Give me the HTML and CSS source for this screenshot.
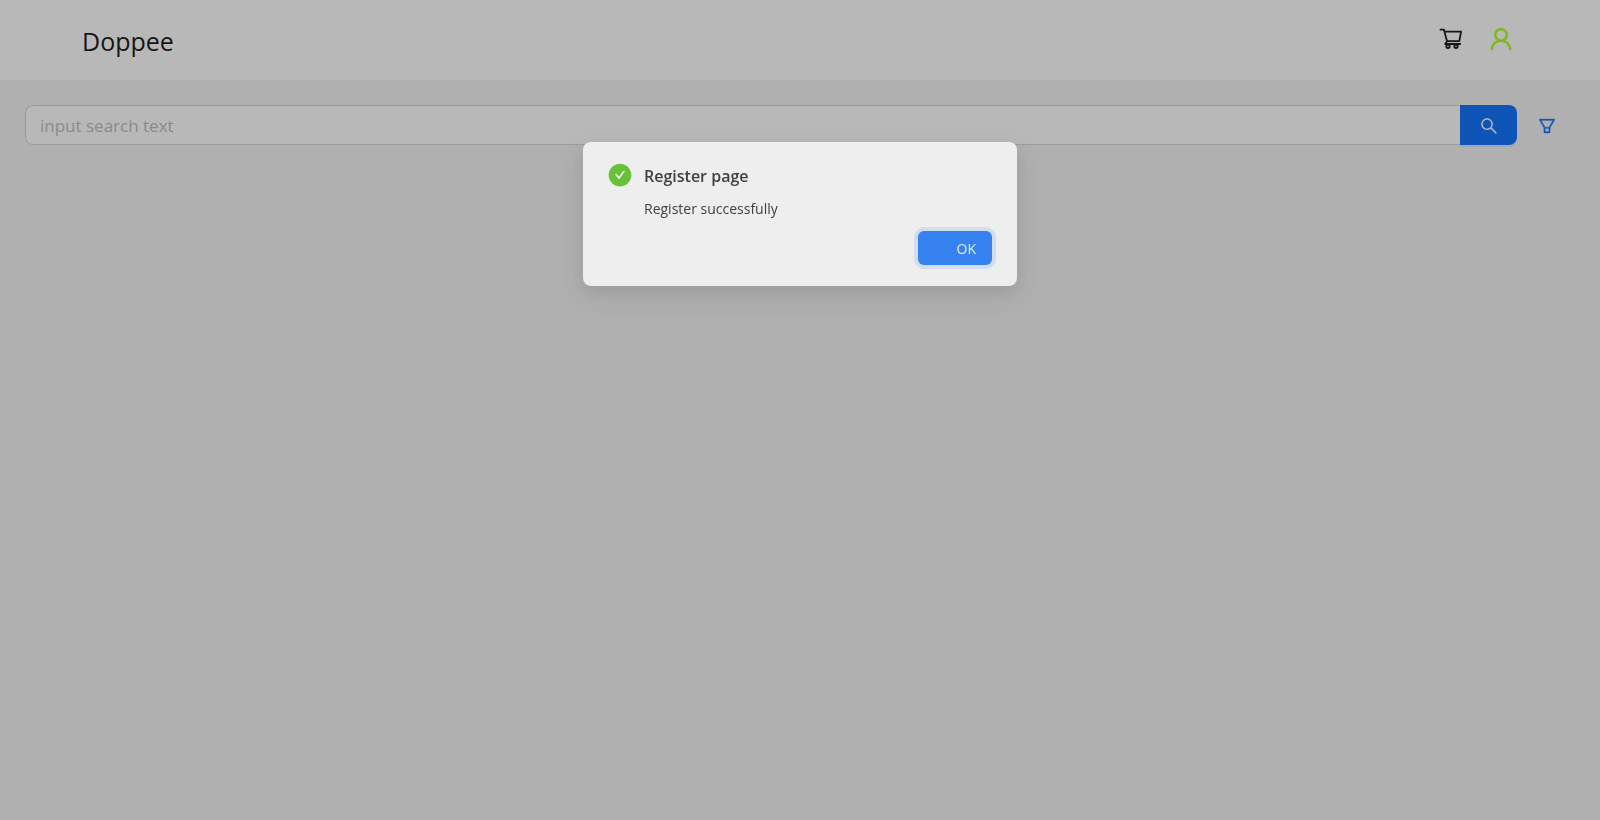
FILE: index.html
```html
<!DOCTYPE html>
<html lang="en">
<head>
<meta charset="utf-8">
<title>Doppee</title>
<link rel="stylesheet" href="styles.css">
</head>
<body>
<header class="header">
  <a class="brand" href="#">Doppee</a>
  <nav class="actions">
    <a class="action" href="#" aria-label="Cart">
      <svg class="icon-cart" viewBox="2 2 25 25" fill="none" stroke="currentColor" stroke-width="1.8" stroke-linecap="round" stroke-linejoin="round"><path d="M4.500 5.700H8L11 17.200H23.300L25.100 7.700H8.600M11 17.200L9.200 20H24.200"/><circle cx="12" cy="22.300" r="1.700"/><circle cx="20" cy="22.300" r="1.700"/></svg>
    </a>
    <a class="action action-user" href="#" aria-label="Account">
      <svg class="icon-user" viewBox="0 0 1024 1024" fill="currentColor" stroke="currentColor" stroke-width="14"><path d="M858.5 763.6a374 374 0 00-80.6-119.5 375.6 375.6 0 00-119.5-80.6c-.4-.2-.8-.3-1.2-.5C719.5 518 760 444.7 760 362c0-137-111-248-248-248S264 225 264 362c0 82.7 40.5 156 102.8 201.1-.4.2-.8.3-1.2.5-44.8 18.9-85 46-119.5 80.6a375.6 375.6 0 00-80.6 119.5A371.7 371.7 0 00136 901.8a8 8 0 008 8.2h60c4.4 0 7.9-3.5 8-7.8 2-77.2 33-149.5 87.8-204.3 56.7-56.7 132-87.9 212.2-87.9s155.5 31.2 212.2 87.9C779 752.7 810 825 812 902.2c.1 4.4 3.6 7.8 8 7.8h60a8 8 0 008-8.2c-1-47.8-10.9-94.3-29.5-138.2zM512 534c-45.9 0-89.1-17.9-121.6-50.4S340 407.9 340 362c0-45.9 17.9-89.1 50.4-121.6S466.1 190 512 190s89.1 17.9 121.6 50.4S684 316.1 684 362c0 45.9-17.9 89.1-50.4 121.6S557.9 534 512 534z"/></svg>
    </a>
  </nav>
</header>
<main class="content">
  <form class="search">
    <input class="search-input" type="text" placeholder="input search text" aria-label="Search">
    <button class="search-button" type="button" aria-label="Search">
      <svg class="icon" viewBox="0 0 1024 1024" fill="currentColor"><path d="M909.6 854.5L649.9 594.8C690.2 542.7 712 479 712 412c0-80.2-31.3-155.4-87.9-212.1-56.6-56.7-132-87.9-212.1-87.9s-155.5 31.3-212.1 87.9C143.2 256.5 112 331.8 112 412c0 80.1 31.3 155.5 87.9 212.1C256.5 680.8 331.8 712 412 712c67 0 130.6-21.8 182.7-62l259.7 259.6a8.2 8.2 0 0011.6 0l43.6-43.5a8.2 8.2 0 000-11.6zM570.4 570.4C528 612.7 471.8 636 412 636s-116-23.3-158.4-65.6C211.3 528 188 471.8 188 412s23.3-116.1 65.6-158.4C296 211.3 352.2 188 412 188s116.1 23.2 158.4 65.6S636 352.2 636 412s-23.3 116.1-65.6 158.4z"/></svg>
    </button>
    <button class="filter-button" type="button" aria-label="Filter">
      <svg class="icon" viewBox="0 0 1024 1024" fill="currentColor" stroke="currentColor" stroke-width="14"><path d="M880.1 154H143.9c-24.5 0-39.8 26.7-27.5 48L349 597.4V838c0 17.7 14.2 32 31.8 32h262.4c17.6 0 31.8-14.3 31.8-32V597.4L907.7 202c12.2-21.3-3.1-48-27.6-48zM603.4 798H420.6V642h182.9v156zm9.6-236.6l-9.5 16.6h-183l-9.5-16.6L212.7 226h598.6L613 561.4z"/></svg>
    </button>
  </form>
</main>
<div class="mask">
  <section class="dialog" role="dialog" aria-modal="true" aria-labelledby="dialog-title">
    <div class="dialog-body">
      <svg class="icon-success" viewBox="0 0 1024 1024" fill="currentColor"><path d="M512 64C264.6 64 64 264.6 64 512s200.6 448 448 448 448-200.6 448-448S759.4 64 512 64zm193.5 301.7l-210.6 292a31.8 31.8 0 01-51.7 0L318.5 484.9c-3.8-5.3 0-12.7 6.5-12.7h46.9c10.2 0 19.9 4.9 25.9 13.3l71.2 98.8 157.2-218c6-8.3 15.6-13.3 25.9-13.3H699c6.5 0 10.3 7.4 6.5 12.7z"/></svg>
      <div class="dialog-text">
        <h2 class="dialog-title" id="dialog-title">Register page</h2>
        <p class="dialog-message">Register successfully</p>
      </div>
    </div>
    <div class="dialog-footer">
      <button class="ok-button" type="button">OK</button>
    </div>
  </section>
</div>
</body>
</html>
```
FILE: styles.css
```css
* {
  box-sizing: border-box;
}

body {
  margin: 0;
  min-height: 100vh;
  background: #f4f4f4;
  color: #1f1f1f;
  font-family: "Segoe UI", "Open Sans", "Noto Sans", sans-serif;
  font-size: 14px;
}

button {
  border: 0;
  padding: 0;
  font: inherit;
  cursor: pointer;
}

svg {
  display: block;
}

.header {
  display: flex;
  align-items: center;
  justify-content: space-between;
  height: 80px;
  padding: 0 82px;
  background: #fff;
}

.brand {
  padding-top: 2px;
  color: #1f1f1f;
  font-size: 25px;
  line-height: 36px;
  text-decoration: none;
}

.actions {
  display: flex;
  align-items: center;
  gap: 24px;
  padding-right: 3px;
  padding-bottom: 3px;
}

.action {
  color: #1f1f1f;
}

.action-user {
  color: #adff24;
}

.icon-cart {
  width: 25px;
  height: 25px;
}

.icon-user {
  width: 28px;
  height: 28px;
}

.icon {
  width: 20px;
  height: 20px;
}

.content {
  padding: 25px 24px 24px 25px;
}

.search {
  display: flex;
  height: 40px;
}

.search-input {
  flex: 1;
  min-width: 0;
  padding: 0 14px;
  border: 1px solid #d9d9d9;
  border-right: 0;
  border-radius: 8px 0 0 8px;
  outline: 0;
  background: #fff;
  font-family: inherit;
  font-size: 17px;
}

.search-input::placeholder {
  color: #bfbfbf;
  opacity: 1;
}

.search-button {
  display: grid;
  place-items: center;
  width: 57px;
  padding-top: 1px;
  border-radius: 0 8px 8px 0;
  background: #1677ff;
  box-shadow: 0 2px 0 rgba(5, 145, 255, 0.1);
  color: #fff;
}

.filter-button {
  display: grid;
  place-items: center;
  width: 59px;
  padding-top: 1px;
  background: transparent;
  color: #1677ff;
}

.mask {
  position: fixed;
  inset: 0;
  display: flex;
  align-items: flex-start;
  justify-content: center;
  padding: 142px 16px 0;
  background: rgba(0, 0, 0, 0.28);
}

.dialog {
  width: 434px;
  max-width: 100%;
  padding: 20px 25px 21px 24px;
  border-radius: 8px;
  background: #eee;
  box-shadow: 0 6px 16px rgba(0, 0, 0, 0.08), 0 9px 28px 8px rgba(0, 0, 0, 0.05);
  color: #404040;
}

.dialog-body {
  display: flex;
  gap: 11px;
}

.icon-success {
  width: 26px;
  height: 26px;
  color: #67c23a;
}

.dialog-title {
  margin: 0;
  font-size: 16px;
  font-weight: 600;
  line-height: 28px;
}

.dialog-message {
  margin: 8px 0 0;
  font-size: 14px;
  line-height: 22px;
}

.dialog-footer {
  display: flex;
  justify-content: flex-end;
  margin-top: 11px;
}

.ok-button {
  width: 74px;
  height: 34px;
  padding: 0 16px;
  border-radius: 6px;
  background: #3582f0;
  box-shadow: 0 0 0 4px #d3ddef;
  color: #e6effc;
  text-align: right;
}
```
